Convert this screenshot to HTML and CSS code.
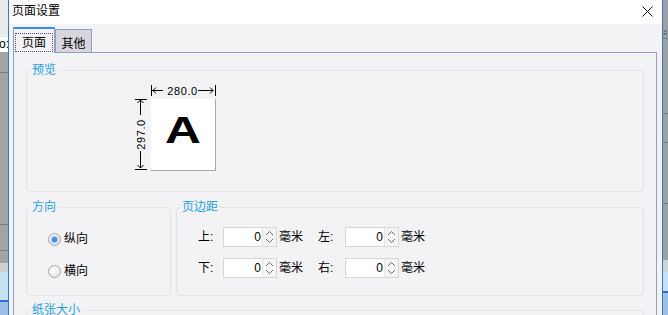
FILE: index.html
```html
<!DOCTYPE html>
<html lang="zh-CN">
<head>
<meta charset="utf-8">
<title>页面设置</title>
<link rel="stylesheet" href="styles.css">
</head>
<body>
<div class="screen">
  <div class="bg-left">
    <div class="bl-top"></div>
    <div class="bl-text">o:</div>
    <div class="bl-grey"><div class="bl-line l1"></div><div class="bl-line l2"></div><div class="bl-line l3"></div></div>
    <div class="bl-light"></div>
    <div class="bl-sky"></div>
    <div class="bl-blue"></div>
    <div class="bl-pale"></div>
  </div>

  <div class="dialog">
    <div class="titlebar">
      <span class="title">页面设置</span>
      <svg class="close" width="11" height="11" viewBox="0 0 11 11"><path d="M0.5 0.5L10.5 10.5M10.5 0.5L0.5 10.5" stroke="#111" stroke-width="1" fill="none"/></svg>
    </div>
    <div class="body">
      <div class="tabs">
        <div class="tab active"><span class="focus">页面</span></div>
        <div class="tab">其他</div>
      </div>
      <div class="panel">
        <fieldset class="group g-preview">
          <legend>预览</legend>
          <div class="preview">
            <span class="corner"></span>
            <svg class="hdim" width="65" height="15" viewBox="0 0 65 15">
              <g stroke="#000" stroke-width="1" fill="none">
                <path d="M0.5 1V12"/>
                <path d="M1 6.5H12M5 3.5L2 6.5L5 9.5"/>
                <path d="M47 6.5H62M59 3.5L62 6.5L59 9.5"/>
                <path d="M64.5 1V12"/>
              </g>
              <text x="31.5" y="10.5" text-anchor="middle" class="dimtext">280.0</text>
            </svg>
            <svg class="vdim" width="18" height="72" viewBox="0 0 18 72">
              <g stroke="#000" stroke-width="1" fill="none">
                <path d="M2 0.5H14"/>
                <path d="M7.5 1V16M4.5 4L7.5 1L10.5 4"/>
                <path d="M7.5 52V69M4.5 66L7.5 69L10.5 66"/>
                <path d="M2 70.5H14"/>
              </g>
              <text x="0" y="0" text-anchor="middle" class="dimtext" transform="translate(11.5 35.5) rotate(-90)">297.0</text>
            </svg>
            <div class="paper"><span class="letter">A</span></div>
          </div>
        </fieldset>

        <div class="row2">
          <fieldset class="group g-orient">
            <legend>方向</legend>
            <div class="radios">
              <div class="radio-row"><span class="radio checked"></span><span>纵向</span></div>
              <div class="radio-row"><span class="radio"></span><span>横向</span></div>
            </div>
          </fieldset>
          <fieldset class="group g-margin">
            <legend>页边距</legend>
            <div class="margins">
              <span class="lbl">上:</span>
              <div class="spin"><span class="val">0</span><span class="arrows"><svg width="13" height="18" viewBox="0 0 13 18"><path d="M3 7L6.5 3.5L10 7M3 11L6.5 14.5L10 11" stroke="#707070" stroke-width="1" fill="none"/></svg></span></div>
              <span class="unit">毫米</span>
              <span class="lbl">左:</span>
              <div class="spin"><span class="val">0</span><span class="arrows"><svg width="13" height="18" viewBox="0 0 13 18"><path d="M3 7L6.5 3.5L10 7M3 11L6.5 14.5L10 11" stroke="#707070" stroke-width="1" fill="none"/></svg></span></div>
              <span class="unit">毫米</span>

              <span class="lbl">下:</span>
              <div class="spin"><span class="val">0</span><span class="arrows"><svg width="13" height="18" viewBox="0 0 13 18"><path d="M3 7L6.5 3.5L10 7M3 11L6.5 14.5L10 11" stroke="#707070" stroke-width="1" fill="none"/></svg></span></div>
              <span class="unit">毫米</span>
              <span class="lbl">右:</span>
              <div class="spin"><span class="val">0</span><span class="arrows"><svg width="13" height="18" viewBox="0 0 13 18"><path d="M3 7L6.5 3.5L10 7M3 11L6.5 14.5L10 11" stroke="#707070" stroke-width="1" fill="none"/></svg></span></div>
              <span class="unit">毫米</span>
            </div>
          </fieldset>
        </div>

        <fieldset class="group g-paper">
          <legend>纸张大小</legend>
        </fieldset>
      </div>
    </div>
  </div>

  <div class="bg-right">
    <div class="br-grey"><div class="br-dots">⁞⁞</div><div class="br-line r1"></div><div class="br-line r2"></div><div class="br-line r3"></div><div class="br-line r4"></div></div>
    <div class="br-light"></div>
    <div class="br-sky"></div>
    <div class="br-blue"></div>
    <div class="br-pale"></div>
  </div>
</div>
</body>
</html>
```

FILE: styles.css
```css
* { box-sizing: border-box; }
html, body { margin: 0; padding: 0; }
body {
  width: 668px;
  height: 315px;
  overflow: hidden;
  font-family: "Liberation Sans", "Noto Sans CJK SC", sans-serif;
  font-size: 12px;
  color: #000;
  background: #a3a3a3;
}
.screen { display: flex; width: 668px; height: 315px; overflow: hidden; }

/* background app strips */
.bg-left { width: 8px; flex: none; display: flex; flex-direction: column; }
.bl-top { height: 37px; background: #ebebeb; }
.bl-text { height: 15px; background: #fff; font-size: 12px; line-height: 15px; margin-left: -1px; overflow: hidden; white-space: nowrap; }
.bl-grey { height: 211px; background: #a4a4a4; display: flex; flex-direction: column; }
.bl-line { height: 1px; background: #7d7d7d; }
.bl-line.l1 { margin-top: 20px; }
.bl-line.l2 { margin-top: 151px; }
.bl-line.l3 { margin-top: 25px; }
.bl-light { height: 9px; background: #cfcfcf; }
.bl-sky { height: 28px; background: #c6e2f2; }
.bl-blue { height: 2px; background: #2a6fcf; }
.bl-pale { flex: 1; background: #9dc0e6; }

.bg-right { width: 5px; flex: none; display: flex; flex-direction: column; }
.br-grey { height: 260px; background: #a0a0a0; display: flex; flex-direction: column; }
.br-dots { margin-top: 28px; height: 10px; font-size: 8px; line-height: 10px; color: #333; overflow: hidden; }
.br-line { height: 1px; background: #787878; }
.br-line.r1 { margin-top: 0; }
.br-line.r2 { margin-top: 74px; }
.br-line.r3 { margin-top: 28px; }
.br-line.r4 { margin-top: 60px; }
.br-light { height: 12px; background: #d2d2d2; }
.br-sky { height: 19px; background: #c6e2f2; }
.br-blue { height: 2px; background: #2a6fcf; }
.br-pale { flex: 1; background: #9dc0e6; }

/* dialog */
.dialog {
  width: 655px;
  flex: none;
  border-left: 1px solid #2f7ad6;
  border-right: 1px solid #2f7ad6;
  background: #f3f3f6;
  display: flex;
  flex-direction: column;
}
.titlebar {
  height: 24px;
  flex: none;
  background: #fff;
  display: flex;
  align-items: center;
  justify-content: space-between;
  padding: 0 9px 2px 3px;
}
.title { font-size: 12px; line-height: 16px; }
.close { display: block; margin-top: 1px; }

.body { flex: 1; padding: 3px 5px 0 4px; display: flex; flex-direction: column; }

.tabs { display: flex; align-items: flex-end; height: 25px; position: relative; z-index: 1; }
.tab {
  width: 37px;
  height: 23px;
  background: #d6d6dc;
  border: 1px solid #8ea2c0;
  border-bottom: none;
  display: flex;
  align-items: center;
  justify-content: center;
  font-size: 12px;
  padding-top: 2px;
}
.tab.active {
  width: 42px;
  height: 26px;
  margin-bottom: -1px;
  background: #f3f3f6;
  border-top: 2px solid #3a8de2;
  align-items: flex-start;
  padding-top: 4px;
}
.focus {
  width: 38px;
  height: 19px;
  border: 1px dotted #4a4a90;
  display: flex;
  align-items: center;
  justify-content: center;
  line-height: 16px;
}

.panel {
  flex: 1;
  border: 1px solid #8ea2c0;
  border-bottom: none;
  padding: 9px 12px 0 12px;
}

/* group boxes */
.group {
  margin: 0;
  padding: 0;
  border: 1px solid #e2e2e8;
  border-radius: 4px;
  min-inline-size: 0;
}
.group legend {
  margin-left: 3px;
  padding: 0 2px;
  font-size: 12px;
  line-height: 16px;
  color: #1c9fe0;
}
.g-preview { height: 130px; margin-bottom: 7px; }
.row2 { display: flex; gap: 5px; height: 97px; margin-bottom: 6px; }
.g-orient { width: 145px; height: 97px; }
.g-margin { width: 468px; height: 97px; }
.g-paper { height: 60px; }

/* preview */
.preview {
  padding: 6px 0 0 106px;
  display: grid;
  grid-template-columns: 18px 65px;
  grid-template-rows: 15px 72px;
}
.hdim, .vdim { display: block; overflow: visible; }
.dimtext { font-family: "Liberation Sans", sans-serif; font-size: 11px; letter-spacing: 0.6px; fill: #000; }
.paper {
  background: #fff;
  border-right: 1px solid #a9a9a9;
  border-bottom: 1px solid #a9a9a9;
  display: flex;
  align-items: center;
  justify-content: center;
}
.letter {
  font-family: "Liberation Sans", sans-serif;
  font-weight: bold;
  font-size: 36px;
  line-height: 36px;
  transform: translateY(-4px) scaleX(1.38);
}

/* orientation */
.radios { padding: 14px 0 0 21px; display: flex; flex-direction: column; gap: 12px; }
.radio-row { height: 20px; display: flex; align-items: center; gap: 3px; line-height: 16px; }
.radio {
  width: 13px;
  height: 13px;
  border-radius: 50%;
  border: 1px solid #a8a8a8;
  background: radial-gradient(circle at 40% 35%, #ffffff 0%, #f2f2f2 45%, #d8d8d8 100%);
  display: flex;
  align-items: center;
  justify-content: center;
}
.radio.checked::after {
  content: "";
  width: 5px;
  height: 5px;
  border-radius: 50%;
  background: #3f8cea;
  box-shadow: 0 0 1px 1px #8fbef2;
}

/* margins */
.margins {
  padding: 12px 0 0 21px;
  display: grid;
  grid-template-columns: 25px 54px 41px 27px 54px auto;
  grid-auto-rows: 20px;
  row-gap: 11px;
  align-items: center;
}
.lbl { line-height: 16px; }
.unit { padding-left: 2px; line-height: 16px; }
.spin {
  height: 20px;
  border: 1px solid #d6d6d6;
  background: #fff;
  display: flex;
}
.val { flex: 1; text-align: right; line-height: 18px; padding-right: 1px; }
.arrows {
  width: 14px;
  background: #f4f4f4;
  border-left: 1px solid #e6e6e6;
  display: flex;
  align-items: center;
  justify-content: center;
}
.arrows svg { display: block; }
```
